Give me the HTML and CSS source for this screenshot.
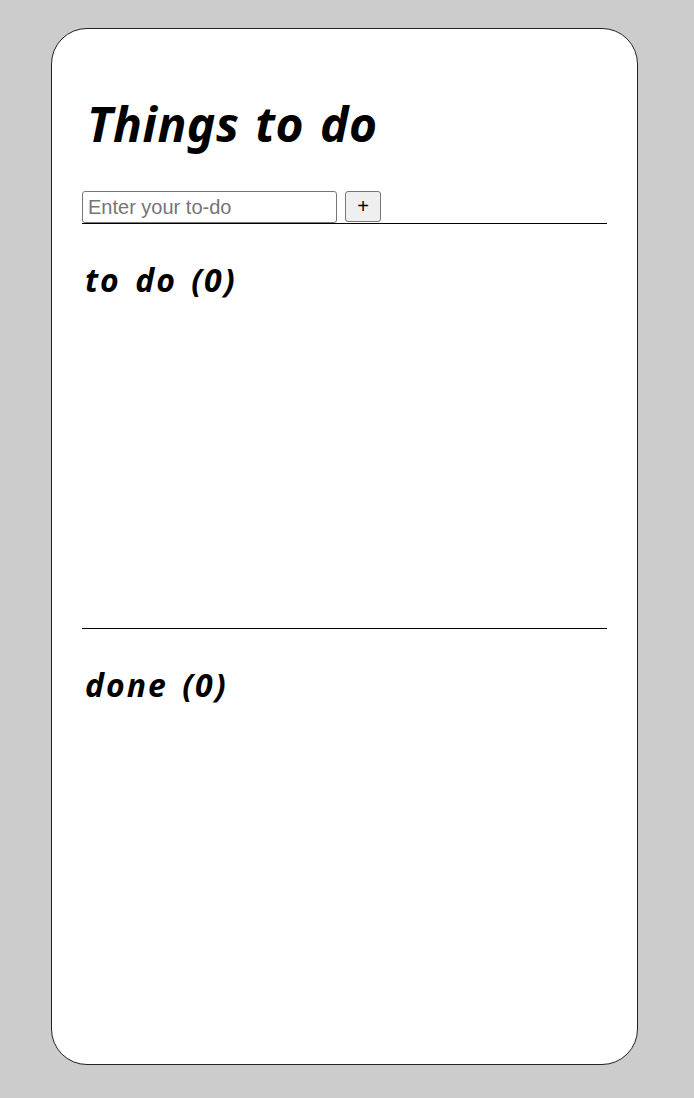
FILE: index.html
```html
<!DOCTYPE html>
<html lang="en">
<head>
<meta charset="utf-8">
<title>Things to do</title>
<link rel="stylesheet" href="styles.css">
</head>
<body>
<div class="card">
  <h1 class="title">Things to do</h1>
  <form class="add-form">
    <input class="todo-input" type="text" placeholder="Enter your to-do">
    <button class="add-btn" type="button">+</button>
  </form>
  <section class="list list-todo">
    <h2 class="list-title">to do (0)</h2>
    <ul class="items"></ul>
  </section>
  <section class="list list-done">
    <h2 class="list-title">done (0)</h2>
    <ul class="items"></ul>
  </section>
</div>
</body>
</html>
```

FILE: styles.css
```css
html, body {
  margin: 0;
  padding: 0;
  background: #cccccc;
}
body {
  padding-top: 28px;
  font-family: "Noto Sans", "Noto Sans CJK KR", sans-serif;
}
.card {
  box-sizing: border-box;
  width: 587px;
  height: 1037px;
  margin-left: 51px;
  background: #ffffff;
  border: 1px solid #222222;
  border-radius: 36px;
  padding: 0 30px;
  display: flex;
  flex-direction: column;
}
.title {
  margin: 63px 0 0 5px;
  font-size: 48px;
  line-height: 64px;
  font-weight: 700;
  font-style: italic;
  letter-spacing: 0.5px;
  word-spacing: 3px;
  color: #000;
}
.add-form {
  margin: 35px 0 0 0;
  display: flex;
  gap: 8px;
  align-items: flex-start;
}
.todo-input {
  box-sizing: border-box;
  width: 255px;
  height: 32px;
  border: 1px solid #767676;
  border-radius: 3px;
  padding: 1px 5px 0;
  font-family: "Liberation Sans", Arial, sans-serif;
  font-size: 20px;
  color: #000;
  background: #fff;
}
.todo-input::placeholder {
  color: #757575;
}
.add-btn {
  box-sizing: border-box;
  width: 36px;
  height: 31px;
  border: 1px solid #767676;
  border-radius: 3px;
  background: #efefef;
  font-family: "Liberation Sans", Arial, sans-serif;
  font-size: 20px;
  color: #000;
  padding: 0;
}
.list {
  border-top: 1px solid #000;
}
.list-todo {
  height: 405px;
  box-sizing: border-box;
}
.list-done {
  flex: 1;
}
.list-title {
  margin: 34px 0 0 3px;
  font-size: 32px;
  line-height: 44px;
  font-weight: 700;
  font-style: italic;
  letter-spacing: 2px;
  word-spacing: 4px;
  color: #000;
}
.items {
  margin: 0;
  padding: 0;
  list-style: none;
}
```
